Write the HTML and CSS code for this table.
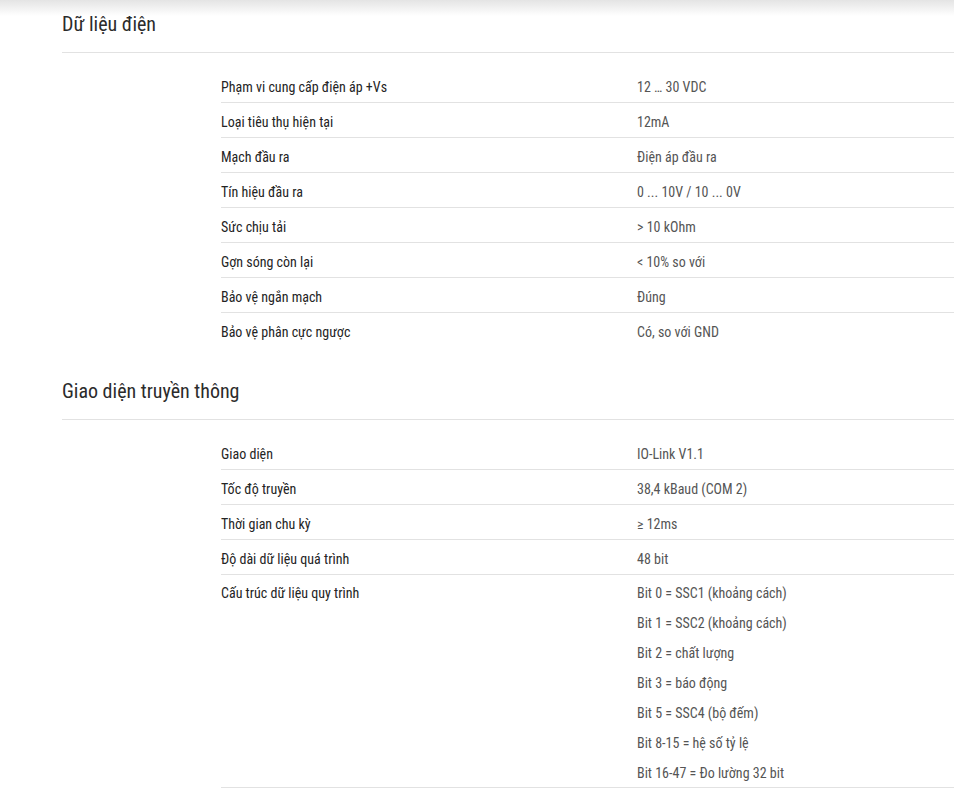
FILE: index.html
```html
<!DOCTYPE html>
<html lang="vi">
<head>
<meta charset="utf-8">
<link rel="stylesheet" href="styles.css">
</head>
<body>
<div class="topshade"></div>
<main class="page">
  <section class="section">
    <h2 class="section-title">Dữ liệu điện</h2>
    <div class="spec">
      <div class="row"><div class="label">Phạm vi cung cấp điện áp +Vs</div><div class="value">12 … 30 VDC</div></div>
      <div class="row"><div class="label">Loại tiêu thụ hiện tại</div><div class="value">12mA</div></div>
      <div class="row"><div class="label">Mạch đầu ra</div><div class="value">Điện áp đầu ra</div></div>
      <div class="row"><div class="label">Tín hiệu đầu ra</div><div class="value">0 ... 10V / 10 ... 0V</div></div>
      <div class="row"><div class="label">Sức chịu tải</div><div class="value">&gt; 10 kOhm</div></div>
      <div class="row"><div class="label">Gợn sóng còn lại</div><div class="value">&lt; 10% so với</div></div>
      <div class="row"><div class="label">Bảo vệ ngắn mạch</div><div class="value">Đúng</div></div>
      <div class="row last"><div class="label">Bảo vệ phân cực ngược</div><div class="value">Có, so với GND</div></div>
    </div>
  </section>
  <section class="section">
    <h2 class="section-title">Giao diện truyền thông</h2>
    <div class="spec">
      <div class="row"><div class="label">Giao diện</div><div class="value">IO-Link V1.1</div></div>
      <div class="row"><div class="label">Tốc độ truyền</div><div class="value">38,4 kBaud (COM 2)</div></div>
      <div class="row"><div class="label">Thời gian chu kỳ</div><div class="value">≥ 12ms</div></div>
      <div class="row"><div class="label">Độ dài dữ liệu quá trình</div><div class="value">48 bit</div></div>
      <div class="row multi"><div class="label">Cấu trúc dữ liệu quy trình</div><div class="value">
        <div>Bit 0 = SSC1 (khoảng cách)</div>
        <div>Bit 1 = SSC2 (khoảng cách)</div>
        <div>Bit 2 = chất lượng</div>
        <div>Bit 3 = báo động</div>
        <div>Bit 5 = SSC4 (bộ đếm)</div>
        <div>Bit 8-15 = hệ số tỷ lệ</div>
        <div>Bit 16-47 = Đo lường 32 bit</div>
      </div></div>
    </div>
  </section>
</main>
</body>
</html>
```

FILE: styles.css
```css
html, body {
  margin: 0;
  padding: 0;
  background: #fff;
}
body {
  font-family: Roboto, "Noto Sans", sans-serif;
  font-stretch: condensed;
  color: #222;
  position: relative;
}
.topshade {
  position: absolute;
  top: 0;
  left: 0;
  right: 0;
  height: 16px;
  background: linear-gradient(to bottom, #e4e4e4, rgba(255,255,255,0));
}
.page {
  padding: 8px 0 0 62px;
}
.section-title {
  margin: 0;
  font-size: 20px;
  font-weight: 400;
  color: #2b2b2b;
  line-height: 32px;
  padding-bottom: 12px;
  border-bottom: 1px solid #e2e2e2;
}
.spec {
  margin: 15px 0 0 159px;
}
.row {
  display: flex;
  font-size: 14px;
  line-height: 30px;
  padding: 4px 0 0;
  border-bottom: 1px solid #e2e2e2;
}
.row.multi {
  padding-top: 3px;
}
.row.multi .value {
  margin-bottom: -1px;
}
.row.last {
  border-bottom: none;
}
.label {
  width: 416px;
  flex: none;
  color: #242424;
}
.value {
  color: #555;
}
.section + .section {
  margin-top: 28px;
}
```
